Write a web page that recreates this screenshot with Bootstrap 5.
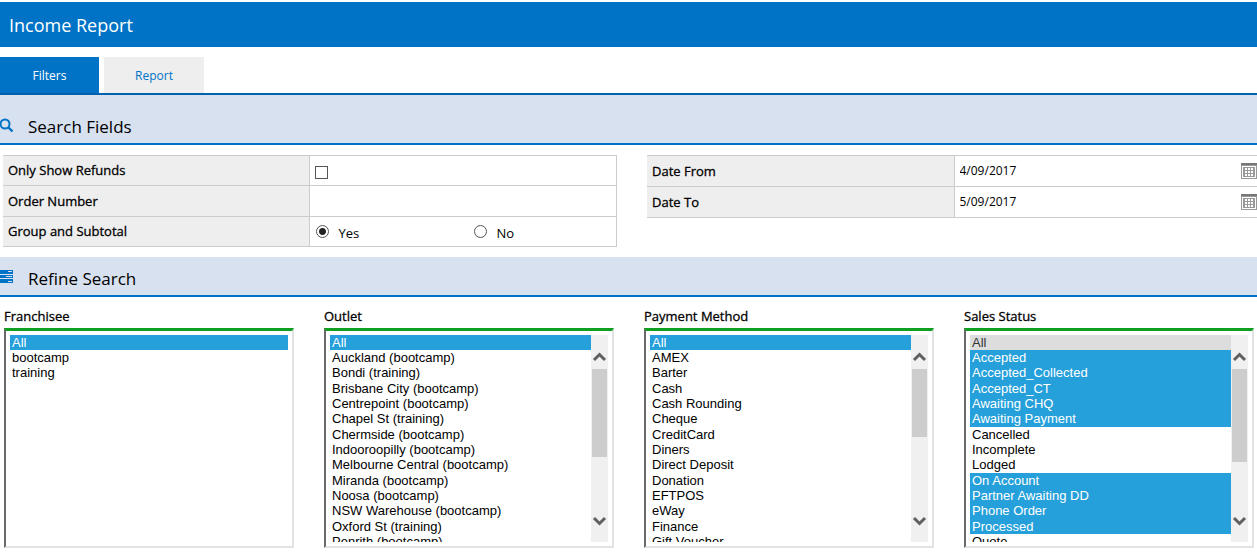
<!DOCTYPE html>
<html lang="en">
<head>
<meta charset="utf-8">
<meta name="viewport" content="width=device-width, initial-scale=1">
<title>Income Report</title>
<link href="https://cdn.jsdelivr.net/npm/bootstrap@5.3.0/dist/css/bootstrap.min.css" rel="stylesheet">
<style>
body { font-family: "Open Sans", "Noto Sans", sans-serif; font-size: 13px; line-height: 18px; color: #000; background: #fff; overflow-x: hidden; }
.title-bar { background: #0073c6; color: #fff; margin-top: 2px; height: 45px; padding: 0 9px; }
.title-bar h1 { font-size: 18px; line-height: 24px; }
.report-tabs { gap: 5px; margin-top: 10px; border-bottom: 2px solid #0062ad; }
.report-tabs .nav-link { width: 100px; height: 36px; padding: 2px 0 0; border: 0; border-radius: 0; font-size: 12px; background: #eee; color: #0073c6; }
.report-tabs .nav-link.active { width: 99px; background: #0073c6; color: #fff; }
.band { background: #d8e1ef; border-bottom: 2px solid #0073c6; padding-bottom: 4px; }
.band h2 { font-size: 17px; line-height: 24px; margin: 0 0 0 14px; }
.band-search { height: 50px; }
.band-refine { height: 40px; margin-top: 10px; }
.field-area { display: grid; grid-template-columns: 614fr 616fr; gap: 30px; align-items: start; margin: 10px -6px 0 3px; }
.field-set { border: 1px solid #ccc; border-width: 1px 1px 0 0; }
.field-line { display: grid; grid-template-columns: 1fr 1fr; height: 31px; border-bottom: 1px solid #ccc; }
.field-line.short { height: 30px; }
.field-name { background: #eee; border-right: 1px solid #ccc; padding: 0 5px 1px; }
.strong-label { -webkit-text-stroke: 0.3px #000; }
.field-value { padding: 0 5px; min-width: 0; }
.field-value input[type=text] { border: 0; background: transparent; width: 100%; min-width: 0; padding: 0; font-size: 12px; line-height: 18px; color: #000; outline: 0; }
.tick, .dot { appearance: none; width: 13px; height: 13px; margin: 0; border: 1px solid #555; background: #fff; flex: none; }
.tick { margin: 3px 0 0; }
.dot { border-radius: 50%; }
.dot:checked { background: radial-gradient(circle, #222 0 3px, #fff 4px); }
.choice { width: 158px; flex: none; gap: 10px; padding-left: 1px; }
.choice:last-child { width: auto; }
.choice label { padding-top: 2px; }
.cal-btn { border: 0; padding: 0; background: none; display: flex; }
.lists { display: grid; grid-template-columns: repeat(4, 1fr); gap: 30px; padding: 10px 3px 4px 4px; }
.lists label { display: block; margin-bottom: 3px; }
.list-frame { display: flex; border-style: solid; border-width: 3px 2px 2px; border-color: #0fa021 #e3e3e3 #e3e3e3 #696969; padding: 4px; }
.list-frame select { flex: 1; min-width: 0; height: 207px; border: 0; padding: 0; margin: 0; background: #fff; outline: 0; font-family: "Liberation Sans", Arial, sans-serif; font-size: 13px; color: #000; scrollbar-width: none; border-radius: 0; }
.list-frame select::-webkit-scrollbar { display: none; }
.list-frame option { height: 15px; min-height: 15px; line-height: 15px; padding: 0 2px; }
.list-frame option:nth-child(3n) { height: 16px; }
.list-frame option:checked { background: #26a0da linear-gradient(#26a0da, #26a0da); color: #fff; -webkit-text-fill-color: #fff; }
.list-frame option.resting { background: #ddd; color: #333; }
.scroll-rail { width: 17px; flex: none; background: #f0f0f0; display: flex; flex-direction: column; padding: 16px 1px 15px; }
.scroll-rail svg { width: 15px; height: 12px; flex: none; fill: none; stroke: #606060; stroke-width: 3; }
.scroll-rail .travel { flex: 1; padding: 6px 0; }
.scroll-rail .thumb { background: #cdcdcd; }
</style>
<script src="https://cdn.jsdelivr.net/npm/bootstrap@5.3.0/dist/js/bootstrap.bundle.min.js"></script>
</head>
<body>
<header class="title-bar d-flex align-items-center"><h1 class="m-0 fw-normal">Income Report</h1></header>
<nav class="report-tabs nav">
  <button type="button" class="nav-link active">Filters</button>
  <button type="button" class="nav-link">Report</button>
</nav>
<form>
  <section>
    <div class="band band-search d-flex align-items-end">
      <svg width="14" height="24" viewBox="0 0 14 24" fill="none" stroke="#0073c6"><circle cx="5" cy="9" r="4.500" stroke-width="2"/><path d="M8.500 12.500L12.500 16.500" stroke-width="2.400"/></svg>
      <h2 class="fw-normal">Search Fields</h2>
    </div>
    <div class="field-area">
      <div class="field-set">
        <div class="field-line short">
          <div class="field-name d-flex align-items-center"><label class="strong-label" for="refunds">Only Show Refunds</label></div>
          <div class="field-value d-flex align-items-center"><input class="tick" type="checkbox" id="refunds"></div>
        </div>
        <div class="field-line">
          <div class="field-name d-flex align-items-center"><label class="strong-label" for="order">Order Number</label></div>
          <div class="field-value d-flex align-items-center"><input type="text" id="order"></div>
        </div>
        <div class="field-line short">
          <div class="field-name d-flex align-items-center"><span class="strong-label">Group and Subtotal</span></div>
          <div class="field-value d-flex align-items-center">
            <div class="choice d-flex align-items-center"><input class="dot" type="radio" name="grp" id="yes" checked><label for="yes">Yes</label></div>
            <div class="choice d-flex align-items-center"><input class="dot" type="radio" name="grp" id="no"><label for="no">No</label></div>
          </div>
        </div>
      </div>
      <div class="field-set">
        <div class="field-line">
          <div class="field-name d-flex align-items-center"><label class="strong-label" for="from">Date From</label></div>
          <div class="field-value d-flex align-items-center"><input type="text" id="from" value="4/09/2017">
            <button type="button" class="cal-btn" aria-label="Pick start date"><svg width="16" height="16" viewBox="0 0 16 16" shape-rendering="crispEdges"><path d="M0 0h16v16H0z" fill="#999"/><path d="M0 0h16v2H0z" fill="#777"/><path d="M1 3h14v12H1z" fill="#fff"/><path d="M2 4h12v10H2z" fill="#999"/><path d="M4 5h2v2H4zM7 5h2v2H7zM10 5h2v2h-2zM4 8h2v2H4zM7 8h2v2H7zM10 8h2v2h-2zM4 11h2v2H4zM7 11h2v2H7zM10 11h2v2h-2z" fill="#fff"/></svg></button>
          </div>
        </div>
        <div class="field-line">
          <div class="field-name d-flex align-items-center"><label class="strong-label" for="to">Date To</label></div>
          <div class="field-value d-flex align-items-center"><input type="text" id="to" value="5/09/2017">
            <button type="button" class="cal-btn" aria-label="Pick end date"><svg width="16" height="16" viewBox="0 0 16 16" shape-rendering="crispEdges"><path d="M0 0h16v16H0z" fill="#999"/><path d="M0 0h16v2H0z" fill="#777"/><path d="M1 3h14v12H1z" fill="#fff"/><path d="M2 4h12v10H2z" fill="#999"/><path d="M4 5h2v2H4zM7 5h2v2H7zM10 5h2v2h-2zM4 8h2v2H4zM7 8h2v2H7zM10 8h2v2h-2zM4 11h2v2H4zM7 11h2v2H7zM10 11h2v2h-2z" fill="#fff"/></svg></button>
          </div>
        </div>
      </div>
    </div>
  </section>
  <section>
    <div class="band band-refine d-flex align-items-end">
      <svg width="14" height="24" viewBox="0 0 14 24" shape-rendering="crispEdges"><path d="M0 3h13v4H0zM0 8h13v3H0zM0 12h13v4H0z" fill="#0073c6"/><path d="M8 4h4v1H8zM6 9h6v1H6zM8 14h4v1H8z" fill="#d8e1ef"/></svg>
      <h2 class="fw-normal">Refine Search</h2>
    </div>
    <div class="lists">
      <div>
        <label class="strong-label" for="franchisee">Franchisee</label>
        <div class="list-frame">
          <select multiple id="franchisee"><option selected>All</option><option>bootcamp</option><option>training</option></select>
        </div>
      </div>
      <div>
        <label class="strong-label" for="outlet">Outlet</label>
        <div class="list-frame">
          <select multiple id="outlet"><option selected>All</option><option>Auckland (bootcamp)</option><option>Bondi (training)</option><option>Brisbane City (bootcamp)</option><option>Centrepoint (bootcamp)</option><option>Chapel St (training)</option><option>Chermside (bootcamp)</option><option>Indooroopilly (bootcamp)</option><option>Melbourne Central (bootcamp)</option><option>Miranda (bootcamp)</option><option>Noosa (bootcamp)</option><option>NSW Warehouse (bootcamp)</option><option>Oxford St (training)</option><option>Penrith (bootcamp)</option></select>
          <div class="scroll-rail" aria-hidden="true"><svg viewBox="0 0 15 12"><path d="M2 9l5.500-5.500L13 9"/></svg><div class="travel"><div class="thumb" style="height:88px"></div></div><svg viewBox="0 0 15 12"><path d="M2 3l5.500 5.500L13 3"/></svg></div>
        </div>
      </div>
      <div>
        <label class="strong-label" for="payment">Payment Method</label>
        <div class="list-frame">
          <select multiple id="payment"><option selected>All</option><option>AMEX</option><option>Barter</option><option>Cash</option><option>Cash Rounding</option><option>Cheque</option><option>CreditCard</option><option>Diners</option><option>Direct Deposit</option><option>Donation</option><option>EFTPOS</option><option>eWay</option><option>Finance</option><option>Gift Voucher</option></select>
          <div class="scroll-rail" aria-hidden="true"><svg viewBox="0 0 15 12"><path d="M2 9l5.500-5.500L13 9"/></svg><div class="travel"><div class="thumb" style="height:68px"></div></div><svg viewBox="0 0 15 12"><path d="M2 3l5.500 5.500L13 3"/></svg></div>
        </div>
      </div>
      <div>
        <label class="strong-label" for="status">Sales Status</label>
        <div class="list-frame">
          <select multiple id="status"><option class="resting">All</option><option selected>Accepted</option><option selected>Accepted_Collected</option><option selected>Accepted_CT</option><option selected>Awaiting CHQ</option><option selected>Awaiting Payment</option><option>Cancelled</option><option>Incomplete</option><option>Lodged</option><option selected>On Account</option><option selected>Partner Awaiting DD</option><option selected>Phone Order</option><option selected>Processed</option><option>Quote</option></select>
          <div class="scroll-rail" aria-hidden="true"><svg viewBox="0 0 15 12"><path d="M2 9l5.500-5.500L13 9"/></svg><div class="travel"><div class="thumb" style="height:93px"></div></div><svg viewBox="0 0 15 12"><path d="M2 3l5.500 5.500L13 3"/></svg></div>
        </div>
      </div>
    </div>
  </section>
</form>
</body>
</html>
